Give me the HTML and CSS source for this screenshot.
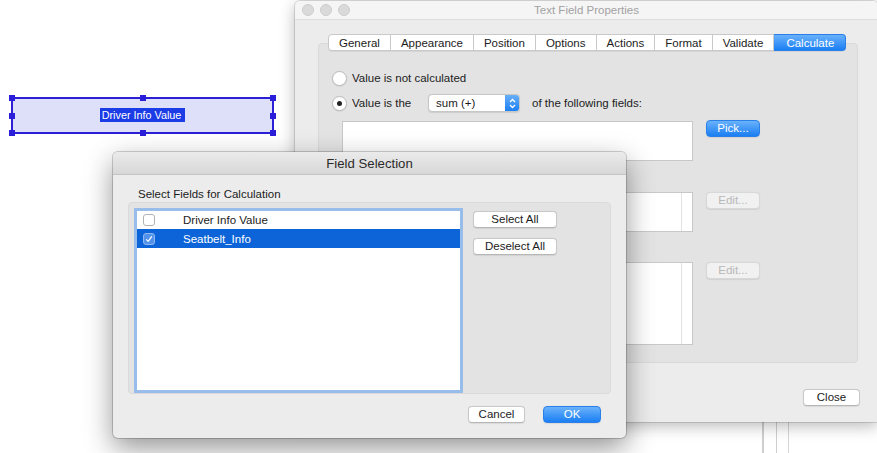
FILE: index.html
```html
<!DOCTYPE html>
<html>
<head>
<meta charset="utf-8">
<link rel="stylesheet" href="styles.css">
</head>
<body>
<div class="desk">
  <div class="field">
    <span class="h h-tl"></span><span class="h h-tm"></span><span class="h h-tr"></span>
    <span class="h h-ml"></span><span class="h h-mr"></span>
    <span class="h h-bl"></span><span class="h h-bm"></span><span class="h h-br"></span>
    <span class="field-text">Driver Info Value</span>
  </div>

  <div class="behind"><span class="bl1"></span><span class="bl2"></span></div>

  <div class="win props">
    <div class="titlebar inactive">
      <div class="lights"><i></i><i></i><i></i></div>
      <div class="title">Text Field Properties</div>
    </div>
    <div class="props-body">
      <div class="tabs">
        <div class="tab">General</div>
        <div class="tab">Appearance</div>
        <div class="tab">Position</div>
        <div class="tab">Options</div>
        <div class="tab">Actions</div>
        <div class="tab">Format</div>
        <div class="tab">Validate</div>
        <div class="tab sel">Calculate</div>
      </div>
      <div class="tabbox">
        <div class="radio-row"><span class="radio"></span><span>Value is not calculated</span></div>
        <div class="radio-row r2">
          <span class="radio on"></span><span class="lbl">Value is the</span>
          <div class="popup"><span class="popup-text">sum (+)</span><span class="stepper"><svg width="7" height="11" viewBox="0 0 7 11"><path d="M1 4 L3.5 1.5 L6 4 M1 7 L3.5 9.5 L6 7" fill="none" stroke="#fff" stroke-width="1.3"/></svg></span></div>
          <span>of the following fields:</span>
        </div>
        <div class="fieldrow"><div class="textbox tb1"></div><button class="btn blue">Pick...</button></div>
        <div class="label">Simplified field notation:</div>
        <div class="fieldrow"><div class="textbox tb2"><span class="sb"></span></div><button class="btn dis">Edit...</button></div>
        <div class="label">Custom calculation script:</div>
        <div class="fieldrow"><div class="textbox tb3"><span class="sb"></span></div><button class="btn dis">Edit...</button></div>
      </div>
      <div class="footer"><button class="btn close">Close</button></div>
    </div>
  </div>

  <div class="win dlg">
    <div class="titlebar active"><div class="title">Field Selection</div></div>
    <div class="dlg-body">
      <div class="dlg-label">Select Fields for Calculation</div>
      <div class="groupbox">
        <div class="list">
          <div class="row"><span class="cb"></span><span>Driver Info Value</span></div>
          <div class="row selrow"><span class="cb on"><svg width="8" height="8" viewBox="0 0 8 8"><path d="M1.2 4.3 L3.2 6.3 L6.8 1.4" fill="none" stroke="#fff" stroke-width="1.2"/></svg></span><span>Seatbelt_Info</span></div>
        </div>
        <div class="side">
          <button class="btn sa">Select All</button>
          <button class="btn da">Deselect All</button>
        </div>
      </div>
      <div class="dlg-foot">
        <button class="btn cancel">Cancel</button>
        <button class="btn blue ok">OK</button>
      </div>
    </div>
  </div>
</div>
</body>
</html>
```
FILE: styles.css
```css
* { box-sizing: border-box; }
body { margin: 0; font-family: "Liberation Sans", Arial, sans-serif; font-size: 11.5px; color: #1c1c1c; }
.desk { position: relative; width: 877px; height: 453px; overflow: hidden; background: #fff; }

/* canvas field */
.field { position: absolute; left: 11px; top: 97px; width: 263px; height: 37px; border: 2px solid #2b20d6; background: #dee0fa; display: flex; align-items: center; justify-content: center; }
.field-text { background: #1c3ce6; color: #fff; font-size: 10.8px; line-height: 14px; padding: 0 4px 0 2px; margin-top: -1px; }
.h { position: absolute; width: 6px; height: 6px; background: #2a1ed8; }
.h-tl { left: -4px; top: -4px; } .h-tm { left: 127px; top: -4px; } .h-tr { right: -4px; top: -4px; }
.h-ml { left: -4px; top: 14px; } .h-mr { right: -4px; top: 14px; }
.h-bl { left: -4px; bottom: -4px; } .h-bm { left: 127px; bottom: -4px; } .h-br { right: -4px; bottom: -4px; }

/* stuff behind the windows */
.behind { position: absolute; left: 760px; top: 400px; width: 40px; height: 53px; }
.bl1 { position: absolute; left: 2px; top: 0; width: 2px; height: 53px; background: #cfcfcf; }
.bl2 { position: absolute; left: 16px; top: 0; width: 13px; height: 53px; border-left: 1px solid #cfcfcf; border-right: 1px solid #d6d6d6; }

/* windows */
.win { position: absolute; background: #ececec; }
.props { left: 295px; top: 1px; width: 583px; height: 421px; border-radius: 5px 5px 0 0; box-shadow: 0 0 0 1px rgba(0,0,0,0.12), 0 4px 16px rgba(0,0,0,0.28); }
.titlebar { position: relative; display: flex; align-items: center; justify-content: center; }
.titlebar.inactive { height: 19px; background: #f5f5f5; border-bottom: 1px solid #dedede; border-radius: 5px 5px 0 0; }
.titlebar.inactive .title { color: #a2a2a2; font-size: 11.5px; }
.lights { position: absolute; left: 7px; top: 3px; display: flex; gap: 6px; }
.lights i { width: 12px; height: 12px; border-radius: 50%; background: #dadada; border: 1px solid #cdcdcd; }

.props-body { padding-top: 14px; }
.tabs { position: relative; z-index: 1; display: flex; justify-content: flex-start; margin: 0 20px 0 33px; }
.tab { height: 17px; line-height: 16px; padding: 0 10px; background: #fff; border: 1px solid #c9c9c9; border-left: none; box-shadow: 0 1px 0 rgba(0,0,0,0.06); }
.tab:first-child { border-left: 1px solid #c9c9c9; border-radius: 4px 0 0 4px; }
.tab.sel { background: linear-gradient(#69b1fb, #1b7ff4); color: #fff; border-color: #2a7ee8; border-radius: 0 4px 4px 0; padding: 0 11px 0 12px; }
.tabbox { margin: -8px 20px 0 23px; height: 320px; background: #e3e3e3; border: 1px solid #d9d9d9; border-radius: 4px; padding: 26px 0 0 13px; }

.radio-row { display: flex; align-items: center; height: 16px; }
.radio-row.r2 { height: 18px; margin-top: 8px; }
.radio { width: 15px; height: 15px; border-radius: 50%; background: #fff; border: 1px solid #bcbcbc; box-shadow: 0 0.5px 1px rgba(0,0,0,0.12); margin-right: 5px; display: flex; align-items: center; justify-content: center; }
.radio.on::after { content: ""; width: 5px; height: 5px; border-radius: 50%; background: #222; }
.lbl { width: 76px; }
.popup { width: 92px; height: 18px; background: #fff; border: 1px solid #c6c6c6; border-radius: 4px; display: flex; align-items: center; margin-right: 12px; box-shadow: 0 0.5px 1px rgba(0,0,0,0.1); overflow: hidden; }
.popup-text { flex: 1; padding-left: 7px; }
.stepper { width: 14px; height: 100%; background: linear-gradient(#66aff9, #1c80f4); display: flex; align-items: center; justify-content: center; }

.fieldrow { display: flex; align-items: flex-start; margin-left: 10px; }
.fieldrow:nth-child(3) { margin-top: 9px; }
.textbox { width: 351px; background: #fff; border: 1px solid #c8c8c8; position: relative; }
.tb1 { height: 40px; }
.tb2 { height: 40px; }
.tb3 { height: 83px; }
.sb { position: absolute; right: 10px; top: 0; bottom: 0; border-left: 1px solid #e2e2e2; }
.label { height: 31px; padding-top: 8px; margin-left: 0; }
.label + .fieldrow + .label { height: 30px; }

.btn { font-family: inherit; font-size: 11.5px; color: #1c1c1c; height: 17px; line-height: 15px; padding: 0; background: #fff; border: 1px solid #c8c8c8; border-bottom-color: #b6b6b6; border-radius: 4px; box-shadow: 0 0.5px 1px rgba(0,0,0,0.08); text-align: center; }
.btn.blue { background: linear-gradient(#6ab2fb, #1a7ef3); border-color: #2b7fe9; color: #fff; }
.btn.dis { background: #f1f1f1; color: #b8b8b8; border-color: #d8d8d8; }
.fieldrow .btn { width: 54px; margin-left: 13px; margin-top: -1px; }
.fieldrow .btn.dis { margin-top: 0; }
.footer { display: flex; justify-content: flex-end; padding: 26px 18px 0 0; }
.close { width: 57px; }

/* dialog */
.dlg { left: 113px; top: 152px; width: 513px; height: 286px; border-radius: 5px; box-shadow: 0 0 0 1px rgba(0,0,0,0.18), 0 10px 28px rgba(0,0,0,0.42); }
.titlebar.active { height: 23px; background: linear-gradient(#ebebeb, #d7d7d7); border-bottom: 1px solid #c4c4c4; border-radius: 5px 5px 0 0; }
.titlebar.active .title { font-size: 13.2px; color: #2b2b2b; }
.dlg-body { padding: 0 15px; }
.dlg-label { margin: 12px 0 0 10px; height: 15px; line-height: 14px; }
.groupbox { height: 192px; background: #e3e3e3; border: 1px solid #dadada; border-radius: 4px; padding: 5px 0 0 5px; display: flex; align-items: flex-start; }
.list { width: 329px; height: 185px; background: #fff; border: 3px solid #98bdeb; }
.row { height: 19px; display: flex; align-items: center; padding-left: 6px; }
.row:first-child { height: 18px; }
.selrow { background: #0c64d8; color: #fff; }
.cb { width: 12px; height: 12px; border: 1px solid #b2b2b2; border-radius: 3px; background: #fff; margin-right: 28px; display: flex; align-items: center; justify-content: center; }
.cb.on { background: #5292ea; border-color: #8fb8f2; }
.side { display: flex; flex-direction: column; gap: 10px; margin: 3px 0 0 10px; }
.side .btn { width: 84px; }
.dlg-foot { display: flex; justify-content: flex-end; gap: 18px; padding: 12px 10px 0 0; }
.cancel { width: 57px; }
.ok { width: 58px; }
```
